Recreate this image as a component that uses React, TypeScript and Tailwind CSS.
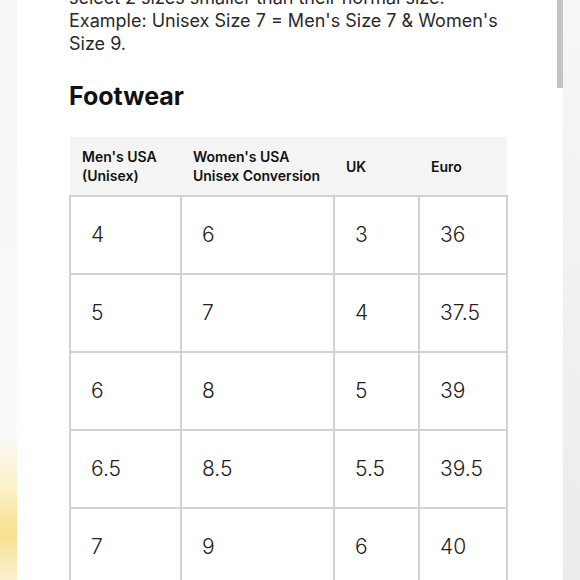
import React from 'react';

const rows = [
  ['4', '6', '3', '36'],
  ['5', '7', '4', '37.5'],
  ['6', '8', '5', '39'],
  ['6.5', '8.5', '5.5', '39.5'],
  ['7', '9', '6', '40'],
];

export default function App() {
  return (
    <div
      className="relative flex h-[580px] w-[580px] overflow-hidden bg-[#f2f2f2]"
      style={{ fontFamily: 'Inter, "Open Sans", sans-serif' }}
    >
      {/* blurred backdrop on the left */}
      <div className="w-[17px] shrink-0 bg-[linear-gradient(to_bottom,#f6f6f6_0%,#fafafa_75%,#fbf0c8_84%,#f8e08e_92%,#faf0cf_100%)]" />

      <div className="relative w-[546px] shrink-0 overflow-hidden bg-white">
        <div className="-mt-[14px] pl-[52px] pr-[58px]">
          <p className="text-[18px] leading-[23px] text-[#2a2a2a]">
            select 2 sizes smaller than their normal size. Example: Unisex Size 7 = Men's Size 7 &amp; Women's Size 9.
          </p>

          <h2 className="mt-[26px] text-[25px] font-bold leading-[30px] text-[#111]">Footwear</h2>

          <table className="mt-[26px] w-[439px] border-collapse">
            <thead>
              <tr className="h-[59px] bg-[#f4f4f4] text-left">
                <th className="w-[111px] px-3 align-middle text-[14px] font-semibold leading-[19px] text-[#111]">Men's USA<br />(Unisex)</th>
                <th className="w-[153px] px-3 align-middle text-[14px] font-semibold leading-[19px] text-[#111]">Women's USA<br />Unisex Conversion</th>
                <th className="w-[85px] px-3 align-middle text-[14px] font-semibold leading-[19px] text-[#111]">UK</th>
                <th className="px-3 align-middle text-[14px] font-semibold leading-[19px] text-[#111]">Euro</th>
              </tr>
            </thead>
            <tbody>
              {rows.map((r, i) => (
                <tr key={i} className="h-[78px]">
                  {r.map((c, j) => (
                    <td key={j} className="border-2 border-[#d2d2d2] pl-[20px] align-middle text-[21px] font-light text-[#222]">
                      {c}
                    </td>
                  ))}
                </tr>
              ))}
            </tbody>
          </table>
        </div>

        {/* scrollbar thumb */}
        <div className="absolute right-0 top-0 h-[88px] w-[6px] bg-[#c4c4c4]" />
      </div>

      <div className="flex-1 bg-gradient-to-b from-[#f6f6f6] to-[#ececec]" />
    </div>
  );
}
